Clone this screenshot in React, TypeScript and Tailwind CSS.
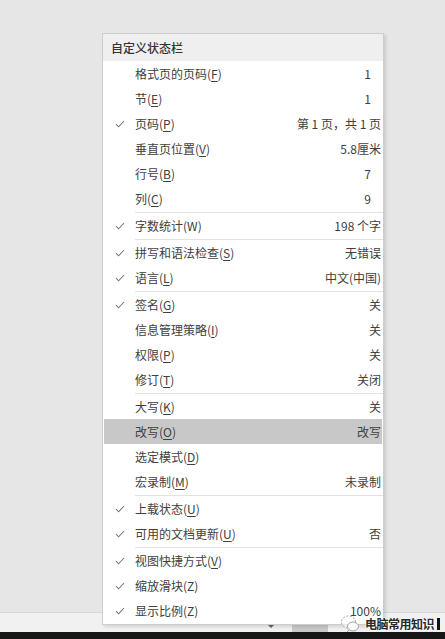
import React from "react";

type Item =
  | { sep: true }
  | {
      sep?: false;
      label: string;
      k: string;
      u?: boolean;
      value?: string;
      check?: boolean;
      pad?: boolean;
      hl?: boolean;
    };

const items: Item[] = [
  { label: "格式页的页码", k: "F", value: "1", pad: true },
  { label: "节", k: "E", value: "1", pad: true },
  { label: "页码", k: "P", value: "第 1 页，共 1 页", check: true },
  { label: "垂直页位置", k: "V", value: "5.8厘米" },
  { label: "行号", k: "B", value: "7", pad: true },
  { label: "列", k: "C", value: "9", pad: true },
  { sep: true },
  { label: "字数统计", k: "W", u: false, value: "198 个字", check: true },
  { sep: true },
  { label: "拼写和语法检查", k: "S", value: "无错误", check: true },
  { label: "语言", k: "L", value: "中文(中国)", check: true },
  { sep: true },
  { label: "签名", k: "G", value: "关", check: true },
  { label: "信息管理策略", k: "I", value: "关" },
  { label: "权限", k: "P", value: "关" },
  { label: "修订", k: "T", value: "关闭" },
  { sep: true },
  { label: "大写", k: "K", value: "关" },
  { label: "改写", k: "O", value: "改写", hl: true },
  { label: "选定模式", k: "D" },
  { label: "宏录制", k: "M", value: "未录制" },
  { sep: true },
  { label: "上载状态", k: "U", check: true },
  { label: "可用的文档更新", k: "U", value: "否", check: true },
  { sep: true },
  { label: "视图快捷方式", k: "V", check: true },
  { label: "缩放滑块", k: "Z", u: false, check: true },
  { label: "显示比例", k: "Z", u: false, value: "100%", check: true },
];

function Check() {
  return (
    <svg width="10" height="8" viewBox="0 0 10 8" fill="none">
      <path d="M1 4.2 L3.6 6.8 L9 1" stroke="#777" strokeWidth="1.1" />
    </svg>
  );
}

export default function App() {
  return (
    <div
      className="relative w-[445px] h-[639px] overflow-hidden bg-[#e6e6e6] flex flex-col text-[12px] text-[#404040]"
      style={{ fontFamily: '"Noto Sans CJK SC", "Noto Sans", sans-serif' }}
    >
      <div className="flex-1" />
      {/* status bar */}
      <div className="h-[20px] bg-[#f1f1f1] border-t border-[#d8d8d8] flex items-end">
        <div className="ml-[268px] mb-[4px] w-0 h-0 border-l-[3px] border-r-[3px] border-t-[3px] border-l-transparent border-r-transparent border-t-[#666]" />
        <div className="ml-[18px] w-[36px] h-[10px] bg-[#c9c9c9]" />
      </div>
      <div className="h-[7px] bg-[#161616]" />

      {/* popup menu */}
      <div className="absolute left-[102px] top-[33px] w-[282px] bg-white border border-[#cdcdcd] shadow-[2px_2px_3px_rgba(0,0,0,0.12)] pb-[1px]">
        <div className="h-[27px] bg-[#efefef] flex items-center pl-[8px] text-[#333] font-medium">
          自定义状态栏
        </div>
        {items.map((it, i) =>
          it.sep ? (
            <div key={i} className="h-[2px] flex items-center pl-[32px]">
              <div className="h-px flex-1 bg-[#e2e2e2]" />
            </div>
          ) : (
            <div
              key={i}
              className={`h-[25px] flex items-center mx-[1px] ${it.hl ? "bg-[#c8c8c8]" : ""}`}
            >
              <div className="w-[31px] flex justify-center pl-[1px]">
                {it.check ? <Check /> : null}
              </div>
              <div className="flex-1 whitespace-nowrap">
                {it.label}(
                <span className={it.u === false ? "" : "underline underline-offset-2"}>{it.k}</span>)
              </div>
              <div className={`whitespace-nowrap ${it.pad ? "pr-[11px]" : "pr-[1px]"}`}>
                {it.value}
              </div>
            </div>
          )
        )}
      </div>

      {/* watermark */}
      <div className="absolute left-[340px] top-[614px] flex items-center gap-[3px] whitespace-nowrap">
        <svg width="22" height="20" viewBox="0 0 22 20" fill="none">
          <ellipse cx="8.5" cy="8" rx="7" ry="6" stroke="#a0a0a0" strokeWidth="1" strokeDasharray="2 1.5" fill="rgba(255,255,255,0.6)" />
          <ellipse cx="13" cy="12.5" rx="5.5" ry="4.5" stroke="#a0a0a0" strokeWidth="1" fill="rgba(255,255,255,0.85)" />
          <path d="M7 18 L9 16" stroke="#a0a0a0" strokeWidth="1" />
        </svg>
        <span
          className="text-[12px] font-bold text-[#2a2a2a] leading-none tracking-[-0.5px]"
          style={{ textShadow: "0 0 2px #fff, 0 0 2px #fff, 1px 1px 1px #fff" }}
        >
          电脑常用知识
        </span>
        <div className="w-[3px] h-[12px] bg-[#111]" />
      </div>
    </div>
  );
}
